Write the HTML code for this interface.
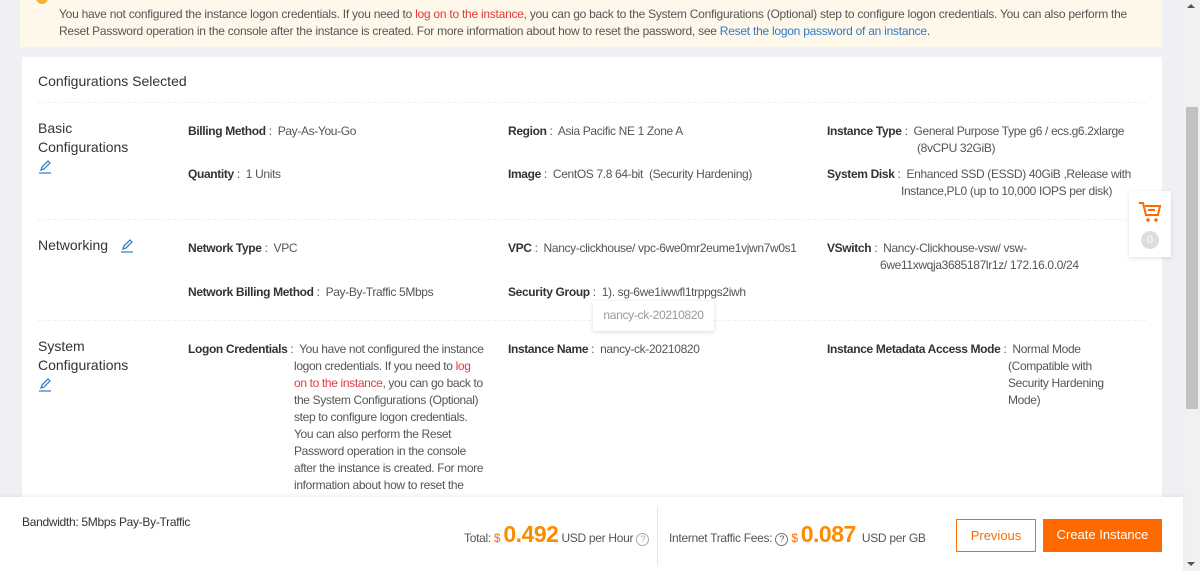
<!DOCTYPE html>
<html><head><style>
*{margin:0;padding:0;box-sizing:border-box}
body{width:1200px;height:571px;overflow:hidden;background:#eef0f3;font-family:"Liberation Sans",sans-serif;color:#333;position:relative}
.warn{position:absolute;left:20px;top:0;width:1142px;height:47px;background:#fef8ea;font-size:12px;line-height:17px;padding:6px 0 0 39px;color:#555;letter-spacing:-0.25px;white-space:nowrap}
.red{color:#e4393c}.blue{color:#2f7ac7}
.card{position:absolute;left:22px;top:57px;width:1140px;height:450px;background:#fff}
.title{position:absolute;left:16px;top:16px;font-size:14px;color:#333}
.hr{position:absolute;left:16px;right:16px;border-top:1px dashed #eee}
.sec{position:absolute;left:16px;font-size:14px;line-height:19px;color:#333}
.f{position:absolute;font-size:12px;line-height:17px;color:#555;letter-spacing:-0.35px}
.f b{color:#333}
.pen{display:inline-block;vertical-align:middle}
.sb{position:absolute;left:1183px;top:0;width:17px;height:571px;background:#f1f1f1}
.thumb{position:absolute;left:1186px;top:107px;width:12px;height:302px;background:#c1c1c1}
.cart{position:absolute;left:1129px;top:191px;width:42px;height:66px;background:#fff;box-shadow:0 1px 4px rgba(0,0,0,.12)}
.foot{position:absolute;left:0;top:497px;width:1183px;height:74px;background:#fff;box-shadow:0 -2px 4px rgba(0,0,0,.05)}
.btn{position:absolute;top:22px;height:33px;font-size:13px;line-height:31px;text-align:center}
</style></head><body>
<div class="warn"><div style="position:absolute;left:16px;top:-8px;width:12px;height:12px;border-radius:50%;background:#f5b133"></div>
You have not configured the instance logon credentials. If you need to <span class="red">log on to the instance</span>, you can go back to the System Configurations (Optional) step to configure logon credentials. You can also perform the<br>Reset Password operation in the console after the instance is created. For more information about how to reset the password, see <span class="blue">Reset the logon password of an instance</span>.</div>
<div class="card">
<div class="title">Configurations Selected</div>
<div class="hr" style="top:45px"></div>
<div class="sec" style="top:62px">Basic<br>Configurations<br><svg class="pen" width="14" height="14" viewBox="0 0 14 14"><path d="M3 10l1-3 6-6 2 2-6 6z" fill="none" stroke="#2f7ac7" stroke-width="1.2"/><path d="M1 13h12" stroke="#2f7ac7" stroke-width="1.2"/></svg></div>
<div class="f" style="left:166px;top:66px"><b>Billing Method</b> :&nbsp; Pay-As-You-Go</div>
<div class="f" style="left:166px;top:109px"><b>Quantity</b> :&nbsp; 1 Units</div>
<div class="f" style="left:486px;top:66px"><b>Region</b> :&nbsp; Asia Pacific NE 1 Zone A</div>
<div class="f" style="left:486px;top:109px"><b>Image</b> :&nbsp; CentOS 7.8 64-bit&nbsp; (Security Hardening)</div>
<div class="f" style="left:805px;top:66px;white-space:nowrap"><b>Instance Type</b> :&nbsp; General Purpose Type g6 / ecs.g6.2xlarge<br><span style="padding-left:90px">(8vCPU 32GiB)</span></div>
<div class="f" style="left:805px;top:109px;white-space:nowrap"><b>System Disk</b> :&nbsp; Enhanced SSD (ESSD) 40GiB ,Release with<br><span style="padding-left:74px">Instance,PL0 (up to 10,000 IOPS per disk)</span></div>
<div class="hr" style="top:162px"></div>
<div class="sec" style="top:179px">Networking &nbsp;&nbsp;<svg class="pen" width="14" height="14" viewBox="0 0 14 14"><path d="M3 10l1-3 6-6 2 2-6 6z" fill="none" stroke="#2f7ac7" stroke-width="1.2"/><path d="M1 13h12" stroke="#2f7ac7" stroke-width="1.2"/></svg></div>
<div class="f" style="left:166px;top:183px"><b>Network Type</b> :&nbsp; VPC</div>
<div class="f" style="left:166px;top:227px"><b>Network Billing Method</b> :&nbsp; Pay-By-Traffic 5Mbps</div>
<div class="f" style="left:486px;top:183px;white-space:nowrap"><b>VPC</b> :&nbsp; Nancy-clickhouse/ vpc-6we0mr2eume1vjwn7w0s1</div>
<div class="f" style="left:486px;top:227px"><b>Security Group</b> :&nbsp; 1). sg-6we1iwwfl1trppgs2iwh</div>
<div class="f" style="left:805px;top:183px;white-space:nowrap"><b>VSwitch</b> :&nbsp; Nancy-Clickhouse-vsw/ vsw-<br><span style="padding-left:53px">6we11xwqja3685187lr1z/ 172.16.0.0/24</span></div>
<div class="hr" style="top:263px"></div>
<div style="position:absolute;left:571px;top:244px;width:121px;height:30px;background:#fff;box-shadow:0 1px 4px rgba(0,0,0,.15);font-size:12px;color:#999;text-align:center;line-height:28px;letter-spacing:-0.3px">nancy-ck-20210820</div>
<div class="sec" style="top:280px">System<br>Configurations<br><svg class="pen" width="14" height="14" viewBox="0 0 14 14"><path d="M3 10l1-3 6-6 2 2-6 6z" fill="none" stroke="#2f7ac7" stroke-width="1.2"/><path d="M1 13h12" stroke="#2f7ac7" stroke-width="1.2"/></svg></div>
<div class="f" style="left:166px;top:284px;white-space:nowrap"><b>Logon Credentials</b> :&nbsp; You have not configured the instance<div style="padding-left:106px">logon credentials. If you need to <span class="red">log</span><br><span class="red">on to the instance</span>, you can go back to<br>the System Configurations (Optional)<br>step to configure logon credentials.<br>You can also perform the Reset<br>Password operation in the console<br>after the instance is created. For more<br>information about how to reset the<br>password, see</div></div>
<div class="f" style="left:486px;top:284px"><b>Instance Name</b> :&nbsp; nancy-ck-20210820</div>
<div class="f" style="left:805px;top:284px;white-space:nowrap"><b>Instance Metadata Access Mode</b> :&nbsp; Normal Mode<div style="padding-left:181px">(Compatible with<br>Security Hardening<br>Mode)</div></div>
</div>
<div class="cart"><svg style="position:absolute;left:9px;top:10px" width="24" height="22" viewBox="0 0 24 22"><path d="M1 2h4l3 12h12l2-9H7" fill="none" stroke="#ff6a00" stroke-width="2"/><path d="M10 9h7" stroke="#ff6a00" stroke-width="2"/><circle cx="10" cy="19" r="1.8" fill="#ff6a00"/><circle cx="18" cy="19" r="1.8" fill="#ff6a00"/></svg>
<div style="position:absolute;left:12px;top:40px;width:18px;height:18px;border-radius:50%;background:#ddd;color:#fff;font-size:11px;text-align:center;line-height:18px">0</div></div>
<div class="sb"></div><div class="thumb"></div>
<div style="position:absolute;left:1187px;top:4px;border:4px solid transparent;border-bottom:4px solid #555;border-top:0"></div>
<div style="position:absolute;left:1187px;top:562px;border:4px solid transparent;border-top:4px solid #555;border-bottom:0"></div>
<div class="foot">
<div style="position:absolute;left:22px;top:18px;font-size:12px;color:#333;letter-spacing:-0.3px">Bandwidth: 5Mbps Pay-By-Traffic</div>
<div style="position:absolute;left:464px;top:24px;font-size:12px;color:#555;white-space:nowrap;letter-spacing:-0.3px">Total: <span style="color:#ff6a00">$</span> <span style="color:#ff8a00;font-size:23px;font-weight:bold;letter-spacing:-0.5px">0.492</span> USD per Hour <span style="display:inline-block;width:13px;height:13px;border:1px solid #aaa;border-radius:50%;font-size:9px;text-align:center;line-height:11px;color:#aaa">?</span></div>
<div style="position:absolute;left:657px;top:10px;width:1px;height:58px;background:#e5e5e5"></div>
<div style="position:absolute;left:669px;top:24px;font-size:12px;color:#555;white-space:nowrap;letter-spacing:-0.3px">Internet Traffic Fees: <span style="display:inline-block;width:13px;height:13px;border:1px solid #777;border-radius:50%;font-size:9px;text-align:center;line-height:11px">?</span> <span style="color:#ff6a00">$</span> <span style="color:#ff8a00;font-size:23px;font-weight:bold;letter-spacing:-0.5px">0.087</span> &nbsp;USD per GB</div>
<div class="btn" style="left:956px;width:80px;border:1px solid #ff6a00;color:#ff6a00">Previous</div>
<div class="btn" style="left:1043px;width:119px;background:#ff6a00;color:#fff">Create Instance</div>
</div>
</body></html>
